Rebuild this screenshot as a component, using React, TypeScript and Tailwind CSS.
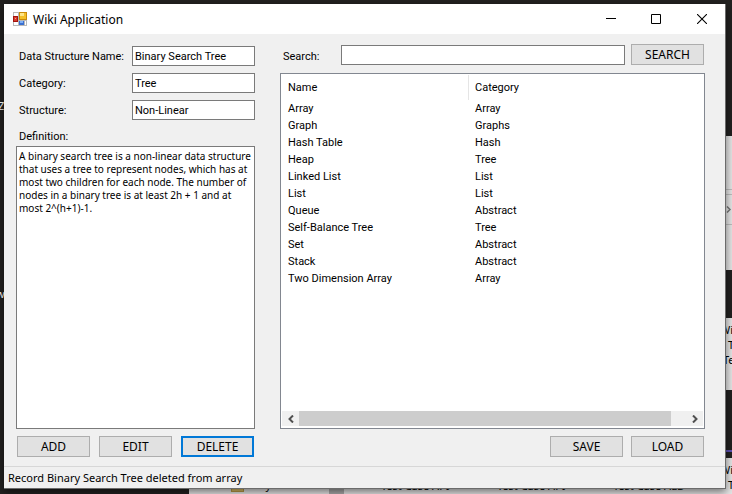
import React from "react";

const entries: [string, string][] = [
  ["Array", "Array"],
  ["Graph", "Graphs"],
  ["Hash Table", "Hash"],
  ["Heap", "Tree"],
  ["Linked List", "List"],
  ["List", "List"],
  ["Queue", "Abstract"],
  ["Self-Balance Tree", "Tree"],
  ["Set", "Abstract"],
  ["Stack", "Abstract"],
  ["Two Dimension Array", "Array"],
];

const definition =
  "A binary search tree is a non-linear data structure that uses a tree to represent nodes, which has at most two children for each node. The number of nodes in a binary tree is at least 2h + 1 and at most 2^(h+1)-1.";

function PushButton({ children, focused = false }: { children: string; focused?: boolean }) {
  return (
    <button
      type="button"
      className={`h-[21px] w-[73px] shrink-0 bg-[#e1e1e1] font-['Noto_Sans',sans-serif] text-[12px] leading-none ${
        focused ? "border-2 border-[#0078d7]" : "border border-[#adadad]"
      }`}
    >
      {children}
    </button>
  );
}

function Field({ id, label, value }: { id: string; label: string; value: string }) {
  return (
    <div className="flex h-5 items-center justify-between">
      <label htmlFor={id} className="pl-[3px]">
        {label}
      </label>
      <input id={id} type="text" defaultValue={value} className="h-5 w-[123px] border border-[#7a7a7a] bg-white px-[2px] outline-none" />
    </div>
  );
}

function AppIcon() {
  return (
    <svg className="h-[14px] w-[14px]" viewBox="0 0 14 14" shapeRendering="crispEdges" aria-hidden="true">
      <rect width="14" height="14" fill="#b9b9b9" />
      <rect x="1" y="1" width="4" height="3" fill="#fff" />
      <rect x="1" y="10" width="4" height="3" fill="#fff" />
      <rect x="12" y="9" width="1" height="4" fill="#fff" />
      <rect x="0" y="4" width="5" height="6" fill="#a31510" />
      <rect x="1" y="5" width="3" height="4" fill="#d83c2c" />
      <rect x="2" y="6" width="1" height="1" fill="#f3a090" />
      <rect x="6" y="0" width="8" height="8" fill="#c98a08" />
      <rect x="7" y="1" width="6" height="6" fill="#f4bf27" />
      <rect x="7" y="1" width="4" height="3" fill="#fde58a" />
      <rect x="6" y="9" width="5" height="4" fill="#3a6fd0" />
      <rect x="7" y="9" width="3" height="2" fill="#7fb0f5" />
    </svg>
  );
}

function Desktop() {
  return (
    <div aria-hidden="true" className="absolute inset-0 overflow-hidden bg-[#222120] font-['Noto_Sans',sans-serif] text-[11px] leading-[15px]">
      <div className="absolute top-[98px] -left-[2px] text-white">Z</div>
      <div className="absolute top-[286px] -left-[4px] text-white">w</div>
      <div className="absolute top-[136px] right-0 h-[134px] w-2 bg-[#e4e4e4]">
        <div className="mt-[53px] h-[6px] border-y border-[#bcbcbc]" />
        <div className="flex h-[30px] items-center justify-end border-b border-[#bcbcbc]">
          <svg className="h-[7px] w-[6px]" viewBox="0 0 6 7" fill="none" stroke="#777" strokeWidth="1.5">
            <path d="M1 .5 4 3.5 1 6.5" />
          </svg>
        </div>
      </div>
      <div className="absolute top-[318px] right-0 h-[72px] w-2 overflow-hidden bg-[#e4e4e4] pt-1">
        <div className="-ml-1">Wi</div>
        <div className="ml-1">T</div>
        <div className="-ml-px">Te</div>
      </div>
      <div className="absolute top-[450px] right-0 h-[2px] w-2 bg-[#5a4fb0]" />
      <div className="absolute top-[458px] right-0 h-9 w-2 overflow-hidden bg-[#e4e4e4] pt-1">
        <div className="-ml-1">Wi</div>
        <div className="ml-1">T</div>
      </div>
      <div className="absolute right-2 bottom-0 left-[189px] h-2 overflow-hidden bg-[#e4e4e4]">
        <div className="absolute bottom-[2px] left-[42px] h-4 w-[13px] border border-[#b99a45] bg-[#d9bb66]" />
        <div className="absolute bottom-[2px] left-[46px] w-[36px] text-right">Library</div>
        <div className="absolute bottom-0 left-[140px] h-2 w-[15px] bg-[#a9a9a9]" />
        <div className="absolute bottom-px left-[192px]">Test Case API</div>
        <div className="absolute bottom-px left-[308px]">Test Case API</div>
        <div className="absolute bottom-px left-[424px]">Test Case ALD</div>
      </div>
    </div>
  );
}

export default function App() {
  return (
    <div className="relative flex min-h-screen pt-1 pr-[6px] pb-[5px] pl-1 font-['Roboto','Liberation_Sans',sans-serif] text-[11px] leading-[13px] text-black">
      <Desktop />
      <div className="relative flex flex-1 flex-col border-r border-b border-[#6b6b6b] bg-[#f0f0f0] shadow-[0_3px_8px_rgba(0,0,0,0.5)]">
        <header className="flex h-[30px] shrink-0 items-center bg-white pl-[9px]">
          <AppIcon />
          <h1 className="flex-1 pl-[6px] font-['Noto_Sans',sans-serif] text-[12px]">Wiki Application</h1>
          <button type="button" aria-label="Minimize" className="flex h-[30px] w-[45px] items-center justify-center">
            <svg className="h-[10px] w-[10px]" viewBox="0 0 10 10" stroke="#000">
              <path d="M0 4.5h10" />
            </svg>
          </button>
          <button type="button" aria-label="Maximize" className="flex h-[30px] w-[45px] items-center justify-center">
            <svg className="h-[10px] w-[10px]" viewBox="0 0 10 10" fill="none" stroke="#000">
              <path d="M.5.5h9v9h-9z" />
            </svg>
          </button>
          <button type="button" aria-label="Close" className="flex h-[30px] w-[47px] items-center justify-center">
            <svg className="h-[10px] w-[10px]" viewBox="0 0 10 10" stroke="#000" strokeWidth="1.1">
              <path d="M0 0 10 10M10 0 0 10" />
            </svg>
          </button>
        </header>

        <main className="grid flex-1 grid-cols-[239px_1fr] gap-x-[25px] pt-[10px] pr-5 pb-[9px] pl-3">
          <form className="flex flex-col pt-[2px]" onSubmit={(e) => e.preventDefault()}>
            <div className="flex flex-col gap-[7px]">
              <Field id="name" label="Data Structure Name:" value="Binary Search Tree" />
              <Field id="category" label="Category:" value="Tree" />
              <Field id="structure" label="Structure:" value="Non-Linear" />
              <label htmlFor="definition" className="pl-[3px] leading-[19px]">
                Definition:
              </label>
            </div>
            <textarea
              id="definition"
              defaultValue={definition}
              className="w-full flex-1 resize-none overflow-hidden border border-[#7a7a7a] bg-white px-[2px] py-[3px] font-['Noto_Sans',sans-serif] text-[10px] leading-[13px] outline-none"
            />
            <div className="mt-[7px] flex justify-between px-px">
              <PushButton>ADD</PushButton>
              <PushButton>EDIT</PushButton>
              <PushButton focused>DELETE</PushButton>
            </div>
          </form>

          <section className="flex flex-col">
            <div className="flex items-center pr-px pl-[3px]">
              <label htmlFor="search" className="w-[58px] pt-[3px]">
                Search:
              </label>
              <input id="search" type="text" className="mr-[6px] h-5 min-w-0 flex-1 border border-[#7a7a7a] bg-white px-[2px] outline-none" />
              <PushButton>SEARCH</PushButton>
            </div>
            <div className="mt-2 flex flex-1 flex-col justify-between border border-[#828790] bg-white p-px">
              <table className="w-full table-fixed border-separate border-spacing-0 text-left">
                <thead>
                  <tr className="h-[25px]">
                    <th className="w-[187px] border-r border-[#e5e5e5] pl-[6px] font-normal">Name</th>
                    <th className="pl-[6px] font-normal">Category</th>
                  </tr>
                </thead>
                <tbody>
                  {entries.map(([name, category]) => (
                    <tr key={name} className="h-[17px]">
                      <td className="pl-[6px]">{name}</td>
                      <td className="pl-[6px]">{category}</td>
                    </tr>
                  ))}
                </tbody>
              </table>
              <div className="mb-px flex h-[15px] bg-[#f0f0f0]">
                <button type="button" aria-label="Scroll left" className="flex w-[17px] items-center justify-center">
                  <svg className="h-2 w-[6px]" viewBox="0 0 6 8" fill="none" stroke="#505050" strokeWidth="2">
                    <path d="M5 .5 1.5 4 5 7.5" />
                  </svg>
                </button>
                <div className="mr-[15px] flex-1 bg-[#cdcdcd]" />
                <button type="button" aria-label="Scroll right" className="flex w-[17px] items-center justify-center">
                  <svg className="h-2 w-[6px]" viewBox="0 0 6 8" fill="none" stroke="#505050" strokeWidth="2">
                    <path d="M1 .5 4.5 4 1 7.5" />
                  </svg>
                </button>
              </div>
            </div>
            <div className="mt-[7px] flex justify-end gap-2 pr-px">
              <PushButton>SAVE</PushButton>
              <PushButton>LOAD</PushButton>
            </div>
          </section>
        </main>

        <footer className="flex h-[22px] shrink-0 items-center border-t border-[#d7d7d7] pl-1 font-['Noto_Sans',sans-serif] text-[11px]">
          Record Binary Search Tree deleted from array
        </footer>
      </div>
    </div>
  );
}
